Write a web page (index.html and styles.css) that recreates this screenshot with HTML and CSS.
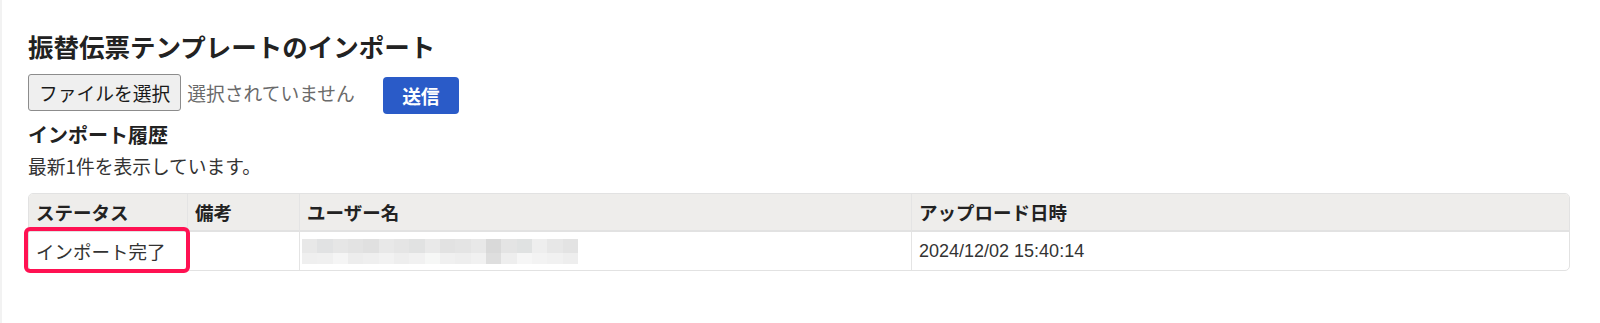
FILE: index.html
```html
<!DOCTYPE html>
<html lang="ja">
<head>
<meta charset="utf-8">
<title>振替伝票テンプレートのインポート</title>
<link rel="stylesheet" href="styles.css">
</head>
<body>
<div class="page">
  <h1 class="title">振替伝票テンプレートのインポート</h1>
  <div class="upload">
    <span class="file-btn">ファイルを選択</span>
    <span class="file-label">選択されていません</span>
    <span class="submit">送信</span>
  </div>
  <h2 class="history">インポート履歴</h2>
  <p class="note">最新1件を表示しています。</p>
  <table class="grid">
    <thead>
      <tr>
        <th class="c1">ステータス</th>
        <th class="c2">備考</th>
        <th class="c3">ユーザー名</th>
        <th class="c4">アップロード日時</th>
      </tr>
    </thead>
    <tbody>
      <tr>
        <td class="c1">インポート完了<span class="hl"></span></td>
        <td class="c2"></td>
        <td class="c3"><div class="blur"></div></td>
        <td class="c4 date">2024/12/02 15:40:14</td>
      </tr>
    </tbody>
  </table>
</div>
</body>
</html>
```

FILE: styles.css
```css
html, body {
  margin: 0;
  padding: 0;
  background: #ffffff;
}

body {
  font-family: "Noto Sans CJK JP", "Noto Sans", sans-serif;
  color: #333333;
}

.page {
  box-sizing: border-box;
  min-height: 323px;
  padding: 31px 30px 0 26px;
  border-left: 2px solid #f2f2f2;
}

.title {
  margin: 0;
  font-size: 25.5px;
  line-height: 30px;
  font-weight: 700;
  color: #222222;
}

.upload {
  display: flex;
  align-items: flex-start;
  margin-top: 13px;
}

.file-btn {
  box-sizing: border-box;
  display: flex;
  align-items: center;
  height: 37px;
  padding: 0 10px;
  border: 1px solid #8c8c8c;
  border-radius: 3px;
  background: #efefef;
  font-size: 18.75px;
  color: #1a1a1a;
}

.file-label {
  margin-left: 6px;
  font-size: 18.75px;
  line-height: 37px;
  color: #6a6a6a;
}

.submit {
  box-sizing: border-box;
  display: flex;
  align-items: center;
  justify-content: center;
  width: 76px;
  height: 37px;
  margin-top: 3px;
  margin-left: 28px;
  border-radius: 4px;
  background: #2a5bc8;
  color: #ffffff;
  font-size: 18.75px;
  font-weight: 700;
}

.history {
  margin: 9px 0 0;
  font-size: 20px;
  line-height: 24px;
  font-weight: 700;
  color: #222222;
}

.note {
  margin: 6.5px 0 0;
  font-size: 18.75px;
  line-height: 24px;
  color: #333333;
}

.grid {
  width: 100%;
  margin-top: 15.5px;
  table-layout: fixed;
  border-collapse: separate;
  border-spacing: 0;
  border: 1px solid #e2e2e2;
  border-radius: 5px;
}

.grid th,
.grid td {
  box-sizing: border-box;
  padding: 0 7px;
  text-align: left;
  vertical-align: middle;
  font-size: 18.5px;
  white-space: nowrap;
}

.grid th {
  height: 38px;
  background: #eeedeb;
  border-bottom: 2px solid #e2e2e2;
  font-weight: 700;
  color: #222222;
}

.grid th.c1 { border-top-left-radius: 4px; }
.grid th.c4 { border-top-right-radius: 4px; }

.grid td {
  height: 38px;
  color: #333333;
}

.grid .c2,
.grid .c3,
.grid .c4 {
  border-left: 1px solid #e4e4e4;
}

.grid th.c1 { width: 158px; }
.grid th.c2 { width: 112px; }
.grid th.c3 { width: 612px; }

.grid td.c1 {
  position: relative;
}

.hl {
  position: absolute;
  top: -5px;
  left: -5px;
  right: -3px;
  bottom: -3px;
  border: 4px solid #ff1152;
  border-radius: 6px;
}

.blur {
  width: 276px;
  height: 25px;
  margin-left: -5px;
  background-image:
    linear-gradient(to right,
      #e8e8e8 0 5.556%, #e1e2e3 5.556% 11.111%, #e6e6e6 11.111% 16.667%,
      #e3e3e3 16.667% 22.222%, #e0e0e0 22.222% 27.778%, #e8e8e8 27.778% 33.333%,
      #e5e5e5 33.333% 38.889%, #e1e2e2 38.889% 44.444%, #e9e9e9 44.444% 50%,
      #e2e2e2 50% 55.556%, #e4e4e4 55.556% 61.111%, #e8e8e8 61.111% 66.667%,
      #d9d9d9 66.667% 72.222%, #e4e4e4 72.222% 77.778%, #e0e2e2 77.778% 83.333%,
      #eeeeee 83.333% 88.889%, #e7e7e7 88.889% 94.444%, #e3e3e3 94.444% 100%),
    linear-gradient(to right,
      #efefef 0 5.556%, #f0f0f0 5.556% 11.111%, #f5f5f5 11.111% 16.667%,
      #ededed 16.667% 22.222%, #efefef 22.222% 27.778%, #f2f2f2 27.778% 33.333%,
      #eeeeee 33.333% 38.889%, #f1f1f1 38.889% 44.444%, #f6f7f6 44.444% 50%,
      #f0f0f0 50% 55.556%, #eeeeee 55.556% 61.111%, #f1f1f1 61.111% 66.667%,
      #dedede 66.667% 72.222%, #eeeeee 72.222% 77.778%, #f6f6f6 77.778% 83.333%,
      #f3f3f3 83.333% 88.889%, #f1f1f1 88.889% 94.444%, #eeeeee 94.444% 100%);
  background-size: 100% 14px, 100% 11px;
  background-position: top left, bottom left;
  background-repeat: no-repeat;
}

.grid td.date {
  font-family: "Liberation Sans", Arial, sans-serif;
  font-size: 18px;
  letter-spacing: 0;
}
```
